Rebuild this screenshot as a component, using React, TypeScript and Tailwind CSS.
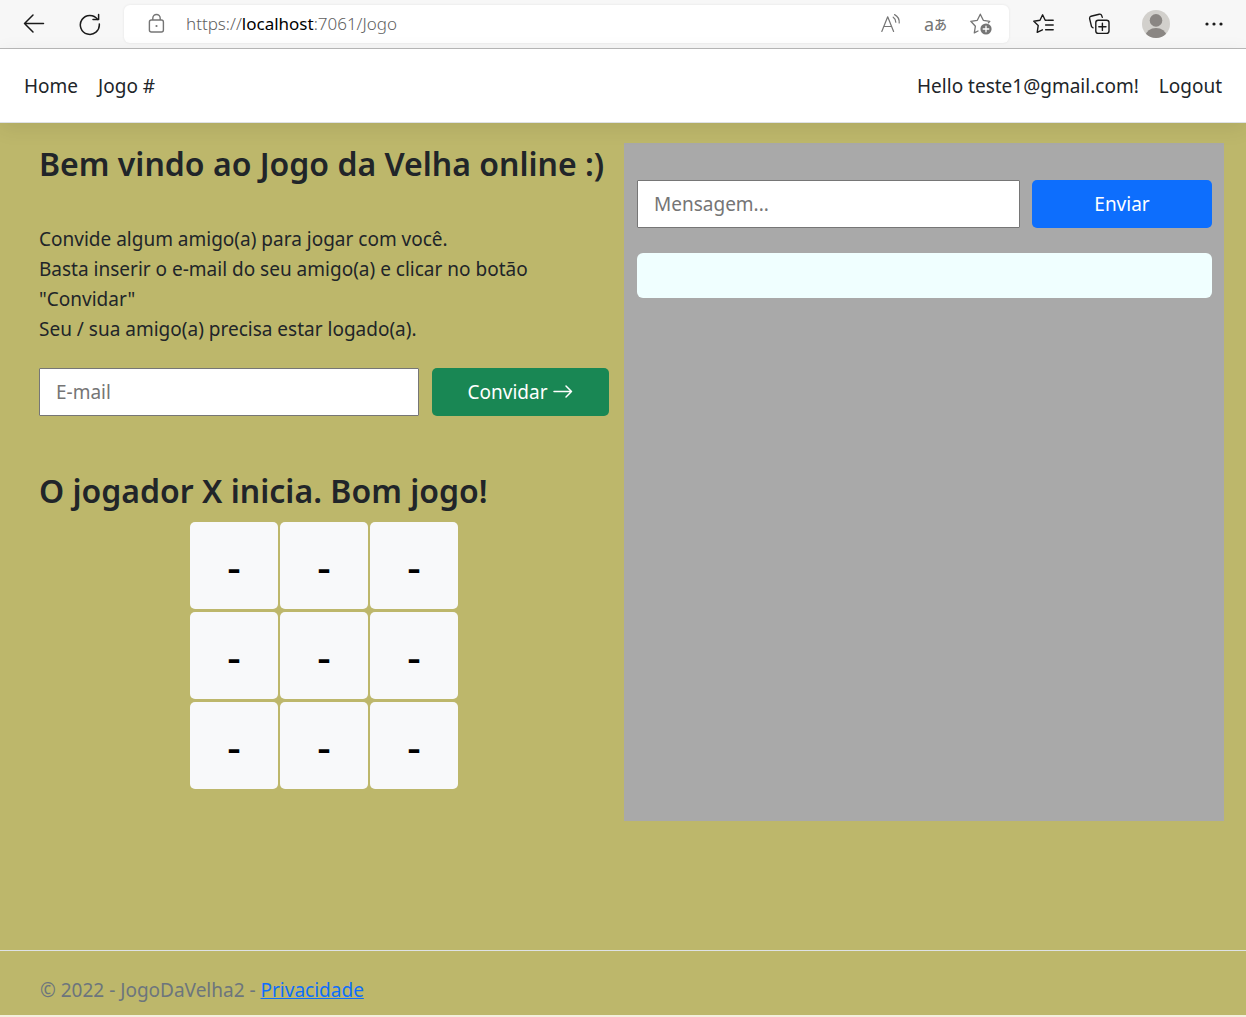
import { useState } from "react";

function BrowserBar() {
  return (
    <div className="flex h-[49px] items-center border-b border-[#b9b9b9] bg-[#f7f7f7] pl-[22px] pr-5 text-[#1a1a1a]">
      <button type="button" aria-label="Voltar" className="mr-8">
        <svg className="size-6" viewBox="0 0 24 24" fill="none" stroke="currentColor" strokeWidth="1.5" strokeLinecap="round" strokeLinejoin="round">
          <path d="M21.5 11.5H2.5M11 3L2.5 11.5L11 20" />
        </svg>
      </button>
      <button type="button" aria-label="Atualizar" className="mr-[22px]">
        <svg className="size-6" viewBox="0 0 24 24" fill="none" stroke="currentColor" strokeWidth="1.5" strokeLinecap="round" strokeLinejoin="round">
          <path d="M19.6 7.4A9.5 9.5 0 1 0 21.3 12" />
          <path d="M20.6 2.5V7.6H15" />
        </svg>
      </button>
      <div className="flex h-[38px] flex-1 items-center rounded-md bg-white pl-[22px] pr-4 text-[#757575] shadow-[0_0_3px_rgba(0,0,0,0.08)]">
        <svg className="mr-[18px] size-[22px]" viewBox="0 0 22 22" fill="none" stroke="currentColor" strokeWidth="1.4" strokeLinejoin="round">
          <rect x="3.4" y="7" width="14" height="12" rx="2" />
          <path d="M6.8 7V5.2a3.7 3.7 0 0 1 7.4 0V7" />
          <circle cx="10.5" cy="13" r="1.1" fill="currentColor" stroke="none" />
        </svg>
        <p className="flex-1 text-[17px] font-light leading-6 text-[#5f5f5f]">
          https://<span className="font-normal text-black">localhost</span>:7061/Jogo
        </p>
        <div className="flex items-center gap-[22px]">
          <button type="button" aria-label="Ler em voz alta">
            <svg className="size-[22px]" viewBox="0 0 22 22" fill="none" stroke="currentColor" strokeWidth="1.2" strokeLinecap="round" strokeLinejoin="round">
              <path d="M1.8 18.5L7.7 3.8L13.6 18.5M3.8 13.5H11.6" />
              <path d="M13.2 4.2a6 6 0 0 1 2.6 5" />
              <path d="M14.6 1.6a8.8 8.8 0 0 1 4.6 8.4" />
            </svg>
          </button>
          <button type="button" aria-label="Traduzir" className="flex items-center">
            <span className="text-[18px] leading-5">a</span>
            <span className="font-['Noto_Sans_CJK_JP',sans-serif] text-[13px] font-medium leading-5">あ</span>
          </button>
          <button type="button" aria-label="Adicionar aos favoritos">
            <svg className="size-6" viewBox="0 0 24 24" fill="none" stroke="currentColor" strokeWidth="1.3" strokeLinecap="round" strokeLinejoin="round">
              <path d="M9 19L5.3 20.9L6.4 14.2L1.8 9.3L8.3 8.3L11.3 2.2L14.3 8.3L20.8 9.3L19.4 10.8" />
              <circle cx="17" cy="17" r="5.6" fill="currentColor" stroke="none" />
              <path d="M17 14.2V19.8M14.2 17H19.8" stroke="white" />
            </svg>
          </button>
        </div>
      </div>
      <div className="ml-[23px] flex items-center">
        <button type="button" aria-label="Favoritos" className="mr-8">
          <svg className="size-6" viewBox="0 0 24 24" fill="none" stroke="currentColor" strokeWidth="1.4" strokeLinecap="round" strokeLinejoin="round">
            <path d="M14.5 8.2H13.2L10.6 2.8L8 8.2L1.8 9.2L6.2 13.6L5.2 20.4L10.4 17.8" />
            <path d="M15.6 8.2H21.2M13.6 13H21.2M13.6 17.8H21.2" />
          </svg>
        </button>
        <button type="button" aria-label="Coleções" className="mr-[30px]">
          <svg className="size-6" viewBox="0 0 24 24" fill="none" stroke="currentColor" strokeWidth="1.4" strokeLinecap="round" strokeLinejoin="round">
            <rect x="7.8" y="8.2" width="13.2" height="13.2" rx="2.4" />
            <path d="M14.4 11.2V18.4M10.8 14.8H18" />
            <path d="M5 15.8L3.6 14.8L1.6 6.6Q1.4 4.8 3 4.2L11.2 2.2Q13.2 1.8 13.7 3.6L14.3 5.4" />
          </svg>
        </button>
        <button type="button" aria-label="Perfil" className="mr-8">
          <svg className="size-7" viewBox="0 0 28 28">
            <clipPath id="avatar">
              <circle cx="14" cy="14" r="14" />
            </clipPath>
            <g clipPath="url(#avatar)">
              <rect width="28" height="28" fill="#d2d0cc" />
              <circle cx="14" cy="10.4" r="6.3" fill="#8a8683" />
              <ellipse cx="14" cy="25.5" rx="10.2" ry="7.5" fill="#8a8683" />
            </g>
          </svg>
        </button>
        <button type="button" aria-label="Mais opções">
          <svg className="size-6" viewBox="0 0 24 24" fill="currentColor">
            <circle cx="5" cy="12" r="1.6" />
            <circle cx="12" cy="12" r="1.6" />
            <circle cx="19" cy="12" r="1.6" />
          </svg>
        </button>
      </div>
    </div>
  );
}

function NavBar() {
  return (
    <nav className="z-10 flex h-[74px] items-center justify-between border-b border-[#dee2e6] bg-white px-6 shadow-[0_5px_20px_rgba(0,0,0,0.08)]">
      <div className="flex gap-5">
        <a href="#home">Home</a>
        <a href="#jogo">Jogo #</a>
      </div>
      <div className="flex gap-5">
        <a href="#conta">Hello teste1@gmail.com!</a>
        <button type="button">Logout</button>
      </div>
    </nav>
  );
}

const field =
  "h-12 min-w-0 rounded-[1px] border border-[#767676] bg-white px-4 placeholder:text-[#757575]";

export default function App() {
  const [cells] = useState<string[]>(Array(9).fill("-"));
  return (
    <div className="flex min-h-screen flex-col bg-[#bdb76b] font-['Noto_Sans','Open_Sans',sans-serif] text-[19px] leading-[30px] text-[#212529]">
      <BrowserBar />
      <NavBar />
      <main className="grid flex-1 grid-cols-2 items-start pl-6 pr-[22px] pt-5">
        <section className="px-[15px]">
          <h1 className="text-[32px] font-semibold leading-[42px]">Bem vindo ao Jogo da Velha online :)</h1>
          <p className="mt-[39px]">
            Convide algum amigo(a) para jogar com você.
            <br />
            Basta inserir o e-mail do seu amigo(a) e clicar no botão "Convidar"
            <br />
            Seu / sua amigo(a) precisa estar logado(a).
          </p>
          <form className="mt-6 flex gap-[13px]" onSubmit={(e) => e.preventDefault()}>
            <input type="email" aria-label="E-mail" placeholder="E-mail" className={`${field} flex-1`} />
            <button type="submit" className="flex h-12 w-[177px] items-center justify-center gap-1 rounded-[5px] bg-[#198754] text-white">
              Convidar
              <svg className="size-[22px]" viewBox="0 0 22 22" fill="none" stroke="currentColor" strokeWidth="1.5" strokeLinecap="round" strokeLinejoin="round">
                <path d="M2 10.5H19.5M14 5L19.5 10.5L14 16" />
              </svg>
            </button>
          </form>
          <h2 className="mt-[54px] text-[32px] font-semibold leading-[42px]">O jogador X inicia. Bom jogo!</h2>
          <div className="mx-auto mt-[10px] grid w-[268px] grid-cols-3 gap-x-[2px] gap-y-[3px]">
            {cells.map((c, i) => (
              <button key={i} type="button" aria-label={`Casa ${i + 1}`} className="h-[87px] rounded-[5px] bg-[#f8f9fa] text-[42px] font-medium text-black">
                {c}
              </button>
            ))}
          </div>
        </section>
        <section className="min-h-[678px] bg-[#a9a9a9] pl-[13px] pr-3 pt-[37px]">
          <form className="flex gap-3" onSubmit={(e) => e.preventDefault()}>
            <input type="text" aria-label="Mensagem" placeholder="Mensagem..." className={`${field} flex-1`} />
            <button type="submit" className="h-12 w-[180px] rounded-[5px] bg-[#0d6efd] text-white">
              Enviar
            </button>
          </form>
          <div className="mt-[25px] h-[45px] rounded-md bg-[#f0ffff]" />
        </section>
      </main>
      <footer className="border-b-2 border-t border-b-[#f3f0dd] border-t-[#dee2e6] px-10 pb-[10px] pt-6 text-[#6c757d]">
        © 2022 - JogoDaVelha2 -{" "}
        <a href="#privacidade" className="text-[#0d6efd] underline">Privacidade</a>
      </footer>
    </div>
  );
}
